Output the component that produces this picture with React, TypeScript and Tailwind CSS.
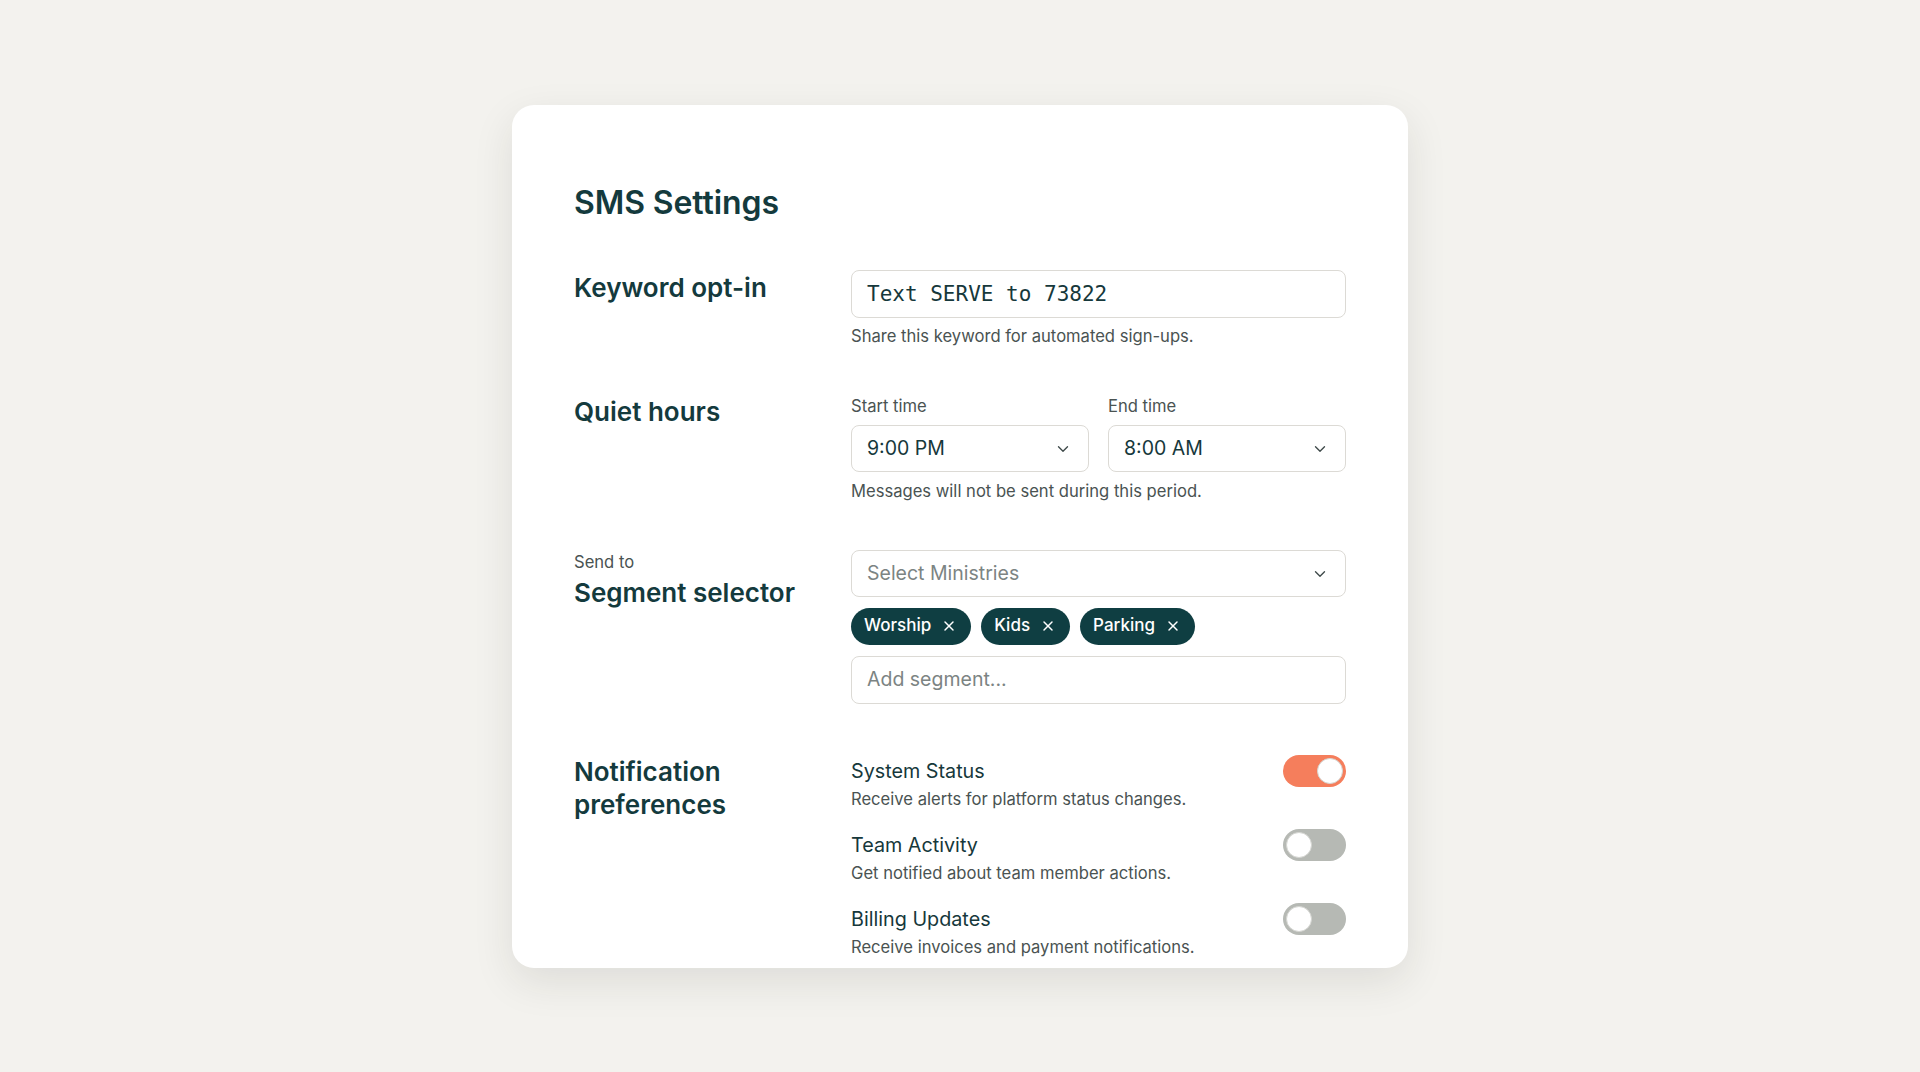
import React from "react";
import { ChevronDown, X } from "lucide-react";

const font = { fontFamily: "Inter, 'Noto Sans', sans-serif" };

function Toggle({ on }: { on: boolean }) {
  return (
    <div
      className={
        "relative mt-[-2px] h-[32px] w-[63px] shrink-0 rounded-full " +
        (on ? "bg-[#f57e5c]" : "bg-[#b6b9b4]")
      }
    >
      <div
        className={
          "absolute top-[3px] h-[26px] w-[26px] rounded-full border border-[#d4d5d1] bg-white " +
          (on ? "left-[34px]" : "left-[3px]")
        }
      />
    </div>
  );
}

function Chip({ label }: { label: string }) {
  return (
    <div className="flex h-[37px] items-center gap-[10px] rounded-full bg-[#0f3e42] pl-[13px] pr-[14px] text-[17px] font-medium text-white">
      <span>{label}</span>
      <X size={16} strokeWidth={2.2} />
    </div>
  );
}

function Item({ title, desc, on }: { title: string; desc: string; on: boolean }) {
  return (
    <div className="flex items-start justify-between">
      <div>
        <div className="text-[19.75px] leading-[28px] text-[#16383b]">{title}</div>
        <div className="mt-[2px] text-[16.6px] leading-[24px] text-[#4a5352]">{desc}</div>
      </div>
      <Toggle on={on} />
    </div>
  );
}

export default function App() {
  return (
    <div
      className="flex min-h-screen items-center justify-center bg-[#f3f2ee]"
      style={font}
    >
      <div className="h-[863px] w-[896px] overflow-hidden rounded-[22px] bg-white px-[62px] pt-[79px] shadow-[0_14px_40px_rgba(40,40,30,0.10)]">
        <h1 className="text-[32px] font-semibold leading-[38px] tracking-[-0.1px] text-[#143a3d]">
          SMS Settings
        </h1>

        <div className="mt-[48px] grid grid-cols-[277px_1fr]">
          <div className="pt-[2px] text-[26px] font-semibold leading-[32px] text-[#143a3d]">
            Keyword opt-in
          </div>
          <div>
            <div className="flex h-[48px] items-center rounded-[8px] border border-[#dcdad5] px-[15px] pt-[3px] text-[21px] text-[#16383b]" style={{ fontFamily: "'DejaVu Sans Mono', 'Liberation Mono', monospace" }}>
              Text SERVE to 73822
            </div>
            <div className="mt-[6px] text-[16.6px] leading-[24px] text-[#4a5352]">
              Share this keyword for automated sign-ups.
            </div>
          </div>
        </div>

        <div className="mt-[46px] grid grid-cols-[277px_1fr]">
          <div className="pt-[2px] text-[26px] font-semibold leading-[32px] text-[#143a3d]">
            Quiet hours
          </div>
          <div>
            <div className="grid grid-cols-2 gap-[19px]">
              <div>
                <div className="text-[16.6px] leading-[24px] text-[#4a5352]">Start time</div>
                <div className="mt-[7px] flex h-[47px] items-center justify-between rounded-[8px] border border-[#dcdad5] pl-[15px] pr-[16px] pt-[1px] text-[19.5px] text-[#16383b]">
                  <span>9:00 PM</span>
                  <ChevronDown size={18} strokeWidth={1.8} className="text-[#3f4a4a]" />
                </div>
              </div>
              <div>
                <div className="text-[16.6px] leading-[24px] text-[#4a5352]">End time</div>
                <div className="mt-[7px] flex h-[47px] items-center justify-between rounded-[8px] border border-[#dcdad5] pl-[15px] pr-[16px] pt-[1px] text-[19.5px] text-[#16383b]">
                  <span>8:00 AM</span>
                  <ChevronDown size={18} strokeWidth={1.8} className="text-[#3f4a4a]" />
                </div>
              </div>
            </div>
            <div className="mt-[7px] text-[16.6px] leading-[24px] text-[#4a5352]">
              Messages will not be sent during this period.
            </div>
          </div>
        </div>

        <div className="mt-[47px] grid grid-cols-[277px_1fr]">
          <div>
            <div className="text-[16.6px] leading-[24px] text-[#4a5352]">Send to</div>
            <div className="mt-[3px] text-[26px] font-semibold leading-[32px] text-[#143a3d]">
              Segment selector
            </div>
          </div>
          <div>
            <div className="flex h-[47px] items-center justify-between rounded-[8px] border border-[#dcdad5] pl-[15px] pr-[16px] pt-[1px] text-[19.5px] text-[#7c8483]">
              <span>Select Ministries</span>
              <ChevronDown size={18} strokeWidth={1.8} className="text-[#3f4a4a]" />
            </div>
            <div className="mt-[11px] flex gap-[10px]">
              <Chip label="Worship" />
              <Chip label="Kids" />
              <Chip label="Parking" />
            </div>
            <div className="mt-[11px] flex h-[48px] items-center rounded-[8px] border border-[#dcdad5] px-[15px] pt-[1px] text-[19.5px] text-[#7c8483]">
              Add segment...
            </div>
          </div>
        </div>

        <div className="mt-[51px] grid grid-cols-[277px_1fr]">
          <div className="text-[26px] font-semibold leading-[33px] text-[#143a3d]">
            Notification
            <br />
            preferences
          </div>
          <div className="flex flex-col gap-[20px] pt-[2px]">
            <Item title="System Status" desc="Receive alerts for platform status changes." on={true} />
            <Item title="Team Activity" desc="Get notified about team member actions." on={false} />
            <Item title="Billing Updates" desc="Receive invoices and payment notifications." on={false} />
          </div>
        </div>
      </div>
    </div>
  );
}
